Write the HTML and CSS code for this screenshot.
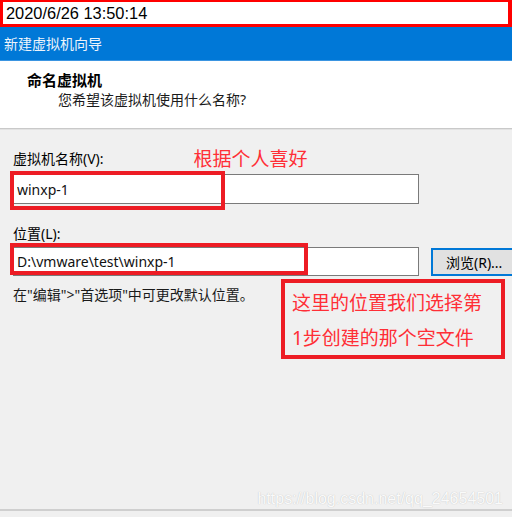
FILE: index.html
```html
<!DOCTYPE html>
<html lang="zh-CN">
<head>
    <meta charset="UTF-8">
    <meta name="viewport" content="width=device-width, initial-scale=1.0">
    <title>新建虚拟机向导</title>
    <link rel="stylesheet" href="styles.css">
</head>
<body>

<div class="stamp">2020/6/26 13:50:14</div>

<div class="titlebar">新建虚拟机向导</div>

<header class="head">
    <h1>命名虚拟机</h1>
    <p>您希望该虚拟机使用什么名称?</p>
</header>

<main class="main">
    <div class="label-row">
        <label for="vmName">虚拟机名称(V):</label>
        <span class="note">根据个人喜好</span>
    </div>
    <div class="field-row">
        <input type="text" id="vmName" class="field" value="winxp-1">
        <span class="mark mark-name"></span>
    </div>

    <div class="label-row loc">
        <label for="vmPath">位置(L):</label>
    </div>
    <div class="field-row">
        <input type="text" id="vmPath" class="field" value="D:\vmware\test\winxp-1">
        <button class="browse">浏览(R)...</button>
        <span class="mark mark-path"></span>
    </div>

    <div class="hint-row">
        <p class="hint">在"编辑"&gt;"首选项"中可更改默认位置。</p>
        <div class="callout">
            <p>这里的位置我们选择第</p>
            <p>1步创建的那个空文件</p>
        </div>
    </div>

    <span class="watermark">https://blog.csdn.net/qq_24654501</span>
</main>

<footer class="foot"></footer>

</body>
</html>
```

FILE: styles.css
```css
html, body {
    margin: 0;
    height: 517px;
    overflow: hidden;
}
body {
    display: flex;
    flex-direction: column;
    background-color: #f0f0f0;
    color: #000;
    font-family: "Noto Sans", "Noto Sans CJK SC", sans-serif;
    font-size: 14px;
}
.stamp {
    height: 27px;
    box-sizing: border-box;
    border: 3px solid #ff0000;
    border-top-width: 2px;
    border-right-width: 4px;
    background: #fff;
    padding-left: 3px;
    font-family: "Liberation Sans", sans-serif;
    font-size: 16.4px;
    line-height: 22px;
}
.titlebar {
    height: 33px;
    background-color: #0078d7;
    border-bottom: 1px solid #3b95e1;
    color: #eef4fb;
    padding-left: 4px;
    line-height: 33px;
}
.head {
    background: #fff;
    height: 68px;
    box-sizing: border-box;
    padding-top: 9px;
    border-bottom: 1px solid #c9c9c9;
    box-shadow: 0 1px 0 #e2e2e2;
}
.head h1 {
    margin: 0 0 0 27px;
    font-size: 15px;
    line-height: 20px;
}
.head p {
    margin: 0 0 0 58px;
    line-height: 20px;
    color: #1a1a1a;
}
.main {
    flex: 1;
    position: relative;
    padding: 17px 0 0 13px;
}
.label-row {
    display: flex;
    align-items: center;
    height: 24px;
    gap: 90px;
}
.loc {
    margin-top: 17px;
}
.note {
    color: #ff2e36;
    font-size: 19px;
}
.field-row {
    position: relative;
    display: flex;
    gap: 12px;
    margin-top: 4px;
}
.loc + .field-row {
    margin-top: 2px;
}
.field {
    flex-shrink: 0;
    width: 406px;
    height: 30px;
    box-sizing: border-box;
    border: 1px solid #7a7a7a;
    background: #fff;
    padding: 0 3px;
    font-family: inherit;
    font-size: 14px;
    color: #111;
}
.loc + .field-row .field {
    height: 29px;
}
.browse {
    flex-shrink: 0;
    width: 90px;
    height: 28px;
    margin-top: 1px;
    border: 2px solid #0078d7;
    background: #e1e1e1;
    font-family: inherit;
    font-size: 14px;
    text-align: left;
    padding: 0 0 0 13px;
}
.mark {
    position: absolute;
    border: 4px solid #ed1c24;
    box-sizing: border-box;
}
.mark-name {
    left: -3px;
    top: -3px;
    width: 215px;
    height: 39px;
}
.mark-path {
    left: -3px;
    top: -4px;
    width: 298px;
    height: 32px;
}
.hint-row {
    display: flex;
    justify-content: space-between;
    padding-right: 7px;
    margin-top: 3px;
}
.hint {
    margin: 6px 0 0;
    line-height: 20px;
    color: #1a1a1a;
}
.callout {
    width: 224px;
    height: 80px;
    box-sizing: border-box;
    border: 4px solid #ed1c24;
    padding: 3px 0 0 7px;
}
.callout p {
    margin: 0;
    color: #ff2e36;
    font-size: 19px;
    line-height: 35px;
}
.watermark {
    position: absolute;
    right: 9px;
    bottom: 1px;
    font-family: "Liberation Sans", sans-serif;
    font-size: 16px;
    color: #fafafa;
    text-shadow: 0 0 1px #b8b8b8;
}
.foot {
    height: 6px;
    border-top: 2px solid #cfcfcf;
    background: #f0f0f0;
}
```
